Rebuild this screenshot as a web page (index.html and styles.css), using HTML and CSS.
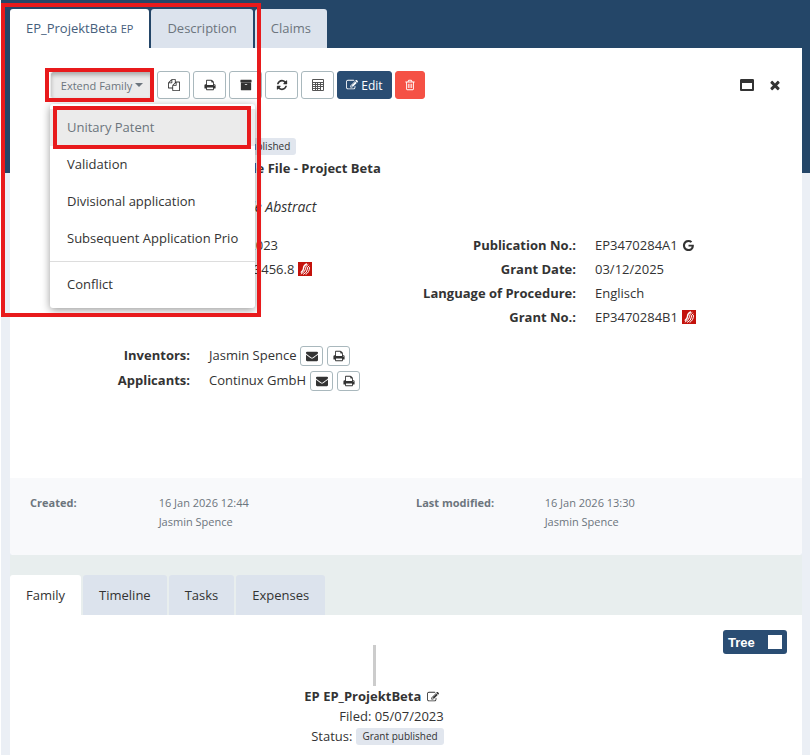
FILE: index.html
```html
<!DOCTYPE html>
<html lang="en">
<head>
    <meta charset="UTF-8">
    <meta name="viewport" content="width=device-width, initial-scale=1.0">
    <title>EP_ProjektBeta</title>
    <link rel="stylesheet" href="styles.css">
</head>
<body>
    <!-- icon set -->
    <svg class="sprite" aria-hidden="true">
        <symbol id="i-copy" viewBox="0 0 1792 1792"><path d="M1696 384q40 0 68 28t28 68v1216q0 40-28 68t-68 28h-960q-40 0-68-28t-28-68v-288h-544q-40 0-68-28t-28-68v-672q0-40 20-88t48-76l408-408q28-28 76-48t88-20h416q40 0 68 28t28 68v328q68-40 128-40h416zm-544 213l-299 299h299v-299zm-640-384l-299 299h299v-299zm196 647l316-316v-416h-384v416q0 40-28 68t-68 28h-416v640h512v-256q0-40 20-88t48-76zm956 804v-1152h-384v416q0 40-28 68t-68 28h-416v640h896z"/></symbol>
        <symbol id="i-print" viewBox="0 0 1792 1792"><path d="M448 1536h896v-256h-896v256zm0-640h896v-384h-160q-40 0-68-28t-28-68v-160h-640v640zm1152 64q0-26-19-45t-45-19-45 19-19 45 19 45 45 19 45-19 19-45zm128 0v416q0 13-9.500 22.500t-22.500 9.500h-224v160q0 40-28 68t-68 28h-960q-40 0-68-28t-28-68v-160h-224q-13 0-22.500-9.500t-9.500-22.500v-416q0-79 56.500-135.500t135.500-56.500h64v-544q0-40 28-68t68-28h672q40 0 88 20t76 48l152 152q28 28 48 76t20 88v256h64q79 0 135.500 56.500t56.500 135.500z"/></symbol>
        <symbol id="i-archive" viewBox="0 0 1792 1792"><path d="M1088 832q0-26-19-45t-45-19h-256q-26 0-45 19t-19 45 19 45 45 19h256q26 0 45-19t19-45zm576-192v960q0 26-19 45t-45 19h-1408q-26 0-45-19t-19-45v-960q0-26 19-45t45-19h1408q26 0 45 19t19 45zm64-448v256q0 26-19 45t-45 19h-1536q-26 0-45-19t-19-45v-256q0-26 19-45t45-19h1536q26 0 45 19t19 45z"/></symbol>
        <symbol id="i-refresh" viewBox="0 0 1792 1792"><path d="M1639 1056q0 5-1 7-64 268-268 434.500t-478 166.500q-146 0-282.500-55t-243.500-157l-129 129q-19 19-45 19t-45-19-19-45v-448q0-26 19-45t45-19h448q26 0 45 19t19 45-19 45l-137 137q71 66 161 102t187 36q134 0 250-65t186-179q11-17 53-117 8-23 30-23h192q13 0 22.500 9.500t9.500 22.500zm25-800v448q0 26-19 45t-45 19h-448q-26 0-45-19t-19-45 19-45l138-138q-148-137-349-137-134 0-250 65t-186 179q-11 17-53 117-8 23-30 23h-199q-13 0-22.500-9.500t-9.500-22.500v-7q65-268 270-434.500t480-166.500q146 0 284 55.500t245 156.500l130-129q19-19 45-19t45 19 19 45z"/></symbol>
        <symbol id="i-calc" viewBox="0 0 12 12"><path fill-rule="evenodd" d="M1 0h10q1 0 1 1v10q0 1-1 1H1q-1 0-1-1V1q0-1 1-1zM1 1v2h10V1zM1 4v1h2V4zM4 4v1h1V4zM6 4v1h2V4zM9 4v1h2V4zM1 6v1h2V6zM4 6v1h1V6zM6 6v1h2V6zM9 6v1h2V6zM1 8v1h2V8zM4 8v1h1V8zM6 8v1h2V8zM9 8v3h2V8zM1 10v1h2v-1zM4 10v1h1v-1zM6 10v1h2v-1z"/></symbol>
        <symbol id="i-edit" viewBox="0 0 1792 1792"><path d="M888 1184l116-116-152-152-116 116v56h96v96h56zm440-720q-16-16-33 1l-350 350q-17 17-1 33t33-1l350-350q17-17 1-33zm80 594v190q0 119-84.500 203.500t-203.500 84.500h-832q-119 0-203.500-84.500t-84.500-203.500v-832q0-119 84.500-203.500t203.500-84.500h832q63 0 117 25 15 7 18 23 3 17-9 29l-49 49q-14 14-32 8-23-6-45-6h-832q-66 0-113 47t-47 113v832q0 66 47 113t113 47h832q66 0 113-47t47-113v-126q0-13 9-22l64-64q15-15 35-7t20 29zm-96-738l288 288-672 672h-288v-288zm444 132l-92 92-288-288 92-92q28-28 68-28t68 28l152 152q28 28 28 68t-28 68z"/></symbol>
        <symbol id="i-trash" viewBox="0 0 1792 1792"><path d="M704 736v576q0 14-9 23t-23 9h-64q-14 0-23-9t-9-23v-576q0-14 9-23t23-9h64q14 0 23 9t9 23zm256 0v576q0 14-9 23t-23 9h-64q-14 0-23-9t-9-23v-576q0-14 9-23t23-9h64q14 0 23 9t9 23zm256 0v576q0 14-9 23t-23 9h-64q-14 0-23-9t-9-23v-576q0-14 9-23t23-9h64q14 0 23 9t9 23zm128 724v-948h-896v948q0 22 7 40.500t14.500 27 10.500 8.500h832q3 0 10.500-8.500t14.500-27 7-40.500zm-672-1076h448l-48-117q-7-9-17-11h-317q-10 2-17 11zm928 32v64q0 14-9 23t-23 9h-96v948q0 83-47 143.500t-113 60.500h-832q-66 0-113-58.500t-47-141.500v-952h-96q-14 0-23-9t-9-23v-64q0-14 9-23t23-9h309l70-167q15-37 54-63t79-26h320q40 0 79 26t54 63l70 167h309q14 0 23 9t9 23z"/></symbol>
        <symbol id="i-window" viewBox="0 0 1792 1792"><path fill-rule="evenodd" d="M256 1408h1280V640H256zM1792 288v1216q0 66-47 113t-113 47H160q-66 0-113-47T0 1504V288q0-66 47-113t113-47h1472q66 0 113 47t47 113z"/></symbol>
        <symbol id="i-times" viewBox="0 0 1792 1792"><path d="M1490 1322q0 40-28 68l-136 136q-28 28-68 28t-68-28l-294-294-294 294q-28 28-68 28t-68-28l-136-136q-28-28-28-68t28-68l294-294-294-294q-28-28-28-68t28-68l136-136q28-28 68-28t68 28l294 294 294-294q28-28 68-28t68 28l136 136q28 28 28 68t-28 68l-294 294 294 294q28 28 28 68z"/></symbol>
        <symbol id="i-google" viewBox="0 0 1792 1792"><path d="M896 786h725q12 67 12 128 0 217-91 387.500t-259.500 266.500-386.500 96q-157 0-299-60.500t-245-163.500-163.500-245-60.500-299 60.500-299 163.500-245 245-163.500 299-60.500q300 0 515 201l-209 201q-123-119-306-119-129 0-238.500 65t-173.500 176.500-64 243.500 64 243.500 173.500 176.500 238.500 65q87 0 160-24t120-60 82-82 51.500-87 22.500-78h-436v-264z"/></symbol>
        <symbol id="i-mail" viewBox="0 0 1792 1792"><path d="M1792 710v794q0 66-47 113t-113 47h-1472q-66 0-113-47t-47-113v-794q44 49 101 87 362 246 497 345 57 42 92.500 65.500t94.500 48 110 24.500h2q51 0 110-24.500t94.500-48 92.500-65.500q170-123 498-345 57-39 100-87zm0-294q0 79-49 151t-122 123q-376 261-468 325-10 7-42.500 31t-54 38.500-52 32.500-57.500 27-50 9h-2q-23 0-50-9t-57.500-27-52-32.500-54-38.500-42.500-31q-91-64-262-182.500t-205-142.500q-62-42-117-115.500t-55-136.500q0-78 41.500-130t118.500-52h1472q65 0 112.500 47t47.500 113z"/></symbol>
        <symbol id="i-epo" viewBox="0 0 14 14">
            <rect width="14" height="14" fill="#c4120c"/>
            <g fill="none" stroke="#fff" stroke-linecap="round">
                <path stroke-width="1.400" d="M8.500 2Q5.500 3.500 5.500 6.500Q5.500 8.500 3.200 10.200"/>
                <path stroke-width="1" d="M10 2.500Q7.300 4 7.500 6.800Q7.500 9.500 3.200 12"/>
                <path stroke-width="1" d="M11 4Q9 5 9.300 7.200Q9.300 10.500 5.500 12.300"/>
                <path stroke-width="1" d="M11.500 5.500Q11.600 10 8 12.300"/>
            </g>
        </symbol>
    </svg>

    <div class="page">
        <nav class="tabs tabs-top">
            <a href="#file" class="tab active">EP_ProjektBeta <small>EP</small></a>
            <a href="#description" class="tab">Description</a>
            <a href="#claims" class="tab">Claims</a>
        </nav>

        <main class="card">
            <div class="toolbar">
                <div class="dropdown">
                    <button type="button" class="btn btn-open">Extend Family <span class="caret"></span></button>
                    <div class="menu">
                        <a href="#unitary" class="hover">Unitary Patent</a>
                        <a href="#validation">Validation</a>
                        <a href="#divisional">Divisional application</a>
                        <a href="#prio">Subsequent Application Prio</a>
                        <hr>
                        <a href="#conflict">Conflict</a>
                    </div>
                </div>
                <button type="button" class="btn" aria-label="Copy"><svg class="icon"><use href="#i-copy"/></svg></button>
                <button type="button" class="btn" aria-label="Print"><svg class="icon"><use href="#i-print"/></svg></button>
                <button type="button" class="btn" aria-label="Archive"><svg class="icon"><use href="#i-archive"/></svg></button>
                <button type="button" class="btn" aria-label="Refresh"><svg class="icon"><use href="#i-refresh"/></svg></button>
                <button type="button" class="btn" aria-label="Calculate"><svg class="icon calc"><use href="#i-calc"/></svg></button>
                <button type="button" class="btn btn-edit"><svg class="icon"><use href="#i-edit"/></svg>Edit</button>
                <button type="button" class="btn btn-delete" aria-label="Delete"><svg class="icon"><use href="#i-trash"/></svg></button>
                <div class="window-tools">
                    <button type="button" aria-label="Maximize"><svg class="icon"><use href="#i-window"/></svg></button>
                    <button type="button" aria-label="Close"><svg class="icon"><use href="#i-times"/></svg></button>
                </div>
            </div>

            <div class="details">
                <div class="values">
                    <div><span class="badge">Grant published</span></div>
                    <div><b>Example File - Project Beta</b></div>
                    <div class="abstract"><i>Example Abstract</i></div>
                </div>
                <div class="columns">
                    <div class="values values-filing">
                        <div>05/07/2023</div>
                        <div>EP23123456.8 <svg class="epo"><use href="#i-epo"/></svg></div>
                    </div>
                    <dl class="rows">
                        <dt>Publication No.:</dt><dd>EP3470284A1 <svg class="icon google"><use href="#i-google"/></svg></dd>
                        <dt>Grant Date:</dt><dd>03/12/2025</dd>
                        <dt>Language of Procedure:</dt><dd>Englisch</dd>
                        <dt>Grant No.:</dt><dd>EP3470284B1 <svg class="epo"><use href="#i-epo"/></svg></dd>
                    </dl>
                </div>
                <dl class="rows rows-people">
                    <dt>Inventors:</dt>
                    <dd>Jasmin Spence
                        <button type="button" class="btn btn-small" aria-label="Mail inventor"><svg class="icon"><use href="#i-mail"/></svg></button>
                        <button type="button" class="btn btn-small" aria-label="Print inventor"><svg class="icon"><use href="#i-print"/></svg></button>
                    </dd>
                    <dt>Applicants:</dt>
                    <dd>Continux GmbH
                        <button type="button" class="btn btn-small" aria-label="Mail applicant"><svg class="icon"><use href="#i-mail"/></svg></button>
                        <button type="button" class="btn btn-small" aria-label="Print applicant"><svg class="icon"><use href="#i-print"/></svg></button>
                    </dd>
                </dl>
            </div>

            <footer class="meta">
                <dl><dt>Created:</dt><dd>16 Jan 2026 12:44<br>Jasmin Spence</dd></dl>
                <dl><dt>Last modified:</dt><dd>16 Jan 2026 13:30<br>Jasmin Spence</dd></dl>
            </footer>
        </main>

        <section class="lower">
            <nav class="tabs tabs-lower">
                <a href="#family" class="tab active">Family</a>
                <a href="#timeline" class="tab">Timeline</a>
                <a href="#tasks" class="tab">Tasks</a>
                <a href="#expenses" class="tab">Expenses</a>
            </nav>
            <div class="panel">
                <label class="switch">Tree <input type="checkbox"></label>
                <div class="tree">
                    <div class="line"></div>
                    <div class="node">
                        <div class="name">EP EP_ProjektBeta <svg class="icon"><use href="#i-edit"/></svg></div>
                        <div>Filed: 05/07/2023</div>
                        <div class="status">Status: <span class="badge">Grant published</span></div>
                    </div>
                </div>
            </div>
        </section>
    </div>

    <!-- red frames over the page -->
    <div class="mark mark-area"></div>
    <div class="mark mark-button"></div>
    <div class="mark mark-item"></div>
</body>
</html>
```
FILE: styles.css
```css
* {
    box-sizing: border-box;
}

body {
    margin: 0;
    font-family: "Open Sans", "Noto Sans", sans-serif;
    font-size: 13px;
    color: #333;
    background: linear-gradient(#244668 173px, #ebeff5 173px);
}

a {
    color: inherit;
    text-decoration: none;
}

dl, dd {
    margin: 0;
}

.sprite {
    display: none;
}

.icon {
    width: 12px;
    height: 12px;
    fill: currentColor;
}

.page {
    display: flex;
    flex-direction: column;
    min-height: 100vh;
    padding: 9px 8px 0 9px;
    border-left: 1px solid #fff;
}

/* tabs */
.tabs {
    display: flex;
    gap: 2px;
}

.tab {
    padding: 0 16px;
    line-height: 39px;
    background: #dce3ed;
    border-radius: 3px 3px 0 0;
}

.tabs-top .tab {
    color: #6c757d;
}

.tab.active {
    background: #fff;
}

.tabs-top .active {
    color: #46607c;
}

.tab small {
    font-size: 11px;
}

.tabs-lower .tab {
    line-height: 40px;
}

/* card */
.card {
    background: #fff;
    border-radius: 0 0 4px 4px;
}

.toolbar {
    display: flex;
    gap: 3px;
    padding: 23px 20px 0 40px;
}

.dropdown {
    position: relative;
}

.btn {
    display: inline-flex;
    align-items: center;
    justify-content: center;
    gap: 3px;
    width: 33px;
    height: 28px;
    padding: 0;
    font: inherit;
    font-size: 12px;
    color: #333;
    background: #fff;
    border: 1px solid #a9b8bd;
    border-radius: 3px;
}

.btn-open {
    width: 104px;
    font-size: 11px;
    color: #6c757d;
    background: #ebebeb;
    border-color: #ebebeb;
    box-shadow: inset 0 3px 4px #aaa;
}

.caret {
    border: 4px solid transparent;
    border-top-color: #6c757d;
    border-bottom: 0;
}

.calc {
    color: #555;
}

.btn-edit {
    width: 55px;
    color: #fff;
    background: #2a4d73;
    border-color: #2a4d73;
}

.btn-delete {
    width: 30px;
    color: #fff;
    background: #f55145;
    border-color: #f55145;
}

.btn-small {
    width: 23px;
    height: 20px;
}

.window-tools {
    display: flex;
    gap: 14px;
    align-items: center;
    margin-left: auto;
}

.window-tools button {
    display: flex;
    padding: 0;
    color: #333;
    background: none;
    border: 0;
}

.window-tools .icon {
    width: 14px;
    height: 14px;
}

.menu {
    position: absolute;
    top: 33px;
    left: 0;
    z-index: 2;
    width: 205px;
    padding: 5px 0;
    background: #fff;
    border-radius: 3px;
    box-shadow: 0 2px 8px rgba(0, 0, 0, .4);
}

.menu a {
    display: block;
    padding: 0 17px;
    line-height: 37px;
    white-space: nowrap;
}

.menu .hover {
    color: #6c757d;
    background: #ebebeb;
}

.menu hr {
    margin: 4px 0;
    border: 0;
    border-top: 1px solid #ddd;
}

/* file details */
.details {
    padding: 36px 0 85px 20px;
}

.values {
    padding-left: 179px;
    line-height: 22px;
}

.values div {
    display: flex;
    align-items: center;
    gap: 4px;
    min-height: 22px;
}

.values .abstract {
    margin: 17px 0 15px;
    font-size: 14px;
}

.values-filing {
    line-height: 24px;
}

.rows {
    display: grid;
    grid-template-columns: 160px 1fr;
    column-gap: 19px;
    line-height: 24px;
}

.rows dt {
    font-weight: bold;
    text-align: right;
}

.rows dd {
    display: flex;
    align-items: center;
    gap: 4px;
}

.rows-people {
    margin-top: 14px;
    line-height: 25px;
}

.columns {
    display: grid;
    grid-template-columns: 1fr 1fr;
    align-items: start;
}

.badge {
    display: inline-block;
    padding: 0 6px;
    font-size: 10px;
    font-weight: 500;
    line-height: 17px;
    background: #e1e6ee;
    border-radius: 3px;
}

.google {
    width: 13px;
    height: 13px;
}

.epo {
    width: 14px;
    height: 14px;
}

.meta {
    display: grid;
    grid-template-columns: 1fr 1fr;
    min-height: 77px;
    padding: 15px 0 0 20px;
    font-size: 11px;
    line-height: 19px;
    color: #6c757d;
    background: #f8f9fb;
    border-radius: 0 0 4px 4px;
}

.meta dl {
    display: grid;
    grid-template-columns: 1fr 2fr;
}

.meta dt {
    font-weight: bold;
}

/* lower part */
.lower {
    display: flex;
    flex: 1;
    flex-direction: column;
    padding-top: 20px;
    background: #e8eeee;
}

.panel {
    flex: 1;
    padding: 15px 15px 0;
    background: #fff;
}

.switch {
    display: flex;
    align-items: center;
    justify-content: space-between;
    width: 64px;
    height: 24px;
    margin-left: auto;
    padding: 0 5px;
    font: bold 13px "Liberation Sans", Arial, sans-serif;
    color: #fff;
    background: #2a4d73;
    border-radius: 3px;
}

.switch input {
    width: 14px;
    height: 14px;
    margin: 0;
    appearance: none;
    background: #fff;
}

.tree {
    display: flex;
    flex-direction: column;
    align-items: center;
    margin-top: -9px;
    padding-right: 64px;
}

.line {
    width: 3px;
    height: 41px;
    background: #ccc;
}

.node {
    line-height: 20px;
    text-align: right;
}

.node .name {
    padding-right: 5px;
    font-weight: bold;
}

.name .icon {
    margin-left: 2px;
    vertical-align: -2px;
}

.status {
    display: flex;
    align-items: center;
    justify-content: flex-end;
    gap: 4px;
}

/* frames */
.mark {
    position: absolute;
    z-index: 3;
    border: 4px solid #e81a1c;
    pointer-events: none;
}

.mark-area {
    top: 3px;
    left: 1px;
    width: 260px;
    height: 314px;
}

.mark-button {
    top: 68px;
    left: 45px;
    width: 109px;
    height: 34px;
}

.mark-item {
    top: 106px;
    left: 53px;
    width: 198px;
    height: 43px;
}
```
